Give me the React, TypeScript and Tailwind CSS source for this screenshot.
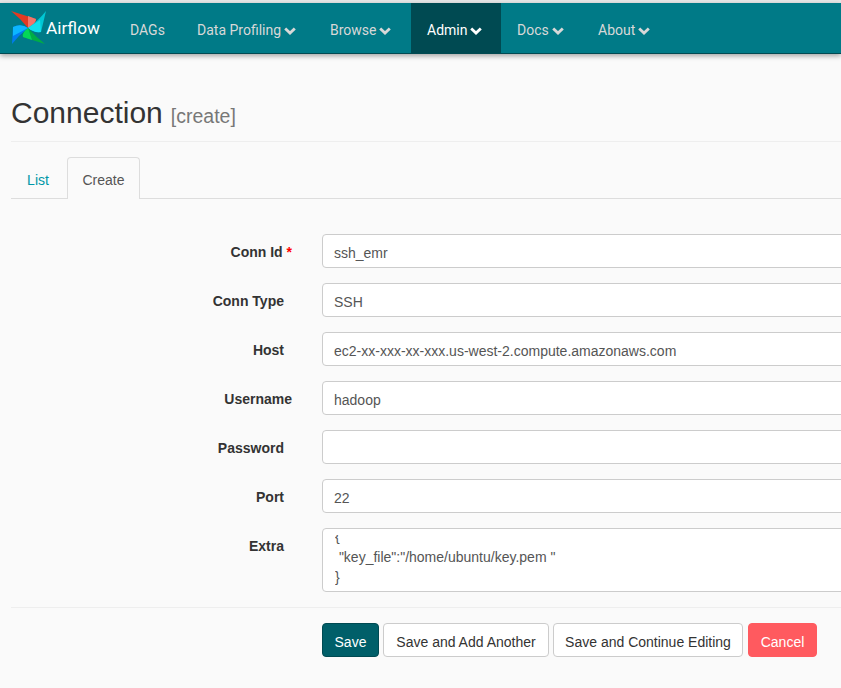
import React from 'react';

const navItems = [
    { label: 'DAGs', caret: false, active: false, width: 'w-[67px]' },
    { label: 'Data Profiling', caret: true, active: false, width: 'w-[133px]' },
    { label: 'Browse', caret: true, active: false, width: 'w-[97px]' },
    { label: 'Admin', caret: true, active: true, width: 'w-[90px]' },
    { label: 'Docs', caret: true, active: false, width: 'w-[81px]' },
    { label: 'About', caret: true, active: false, width: 'w-[90px]' },
];

const fields = [
    { label: 'Conn Id', value: 'ssh_emr', required: true, wide: true },
    { label: 'Conn Type', value: 'SSH' },
    { label: 'Host', value: 'ec2-xx-xxx-xx-xxx.us-west-2.compute.amazonaws.com' },
    { label: 'Username', value: 'hadoop', wide: true },
    { label: 'Password', value: '' },
    { label: 'Port', value: '22' },
];

const Chevron = () => (
    <svg viewBox="0 0 12 8" className="w-[12px] h-[8px] ml-[3px]" fill="none" stroke="currentColor" strokeWidth="2.8">
        <path d="M1.2 1.4 L6 6 L10.8 1.4" />
    </svg>
);

const Logo = () => (
    <svg viewBox="0 0 36 36" className="w-[36px] h-[36px]">
        <path d="M0 1 L25 9 Q25 14 17 18 Q9 8 0 1 Z" fill="#e43921" />
        <path d="M17 6 L25 9 Q25 14 17 18 Z" fill="#f4756a" />
        <path d="M35 1 L30 22 Q23 23 17 18 Q27 11 35 1 Z" fill="#00c7d4" />
        <path d="M29 10 L30 22 Q23 23 17 18 Z" fill="#11e1ee" />
        <path d="M34 34 L12 27 Q11 22 17 18 Q25 27 34 34 Z" fill="#00ad46" />
        <path d="M21 30 L12 27 Q11 22 17 18 Z" fill="#04d659" />
        <path d="M1 34 L2 17 Q10 13 17 18 Q8 25 1 34 Z" fill="#017cee" />
        <path d="M2 26 L2 17 Q10 13 17 18 Z" fill="#0cb6ff" />
    </svg>
);

export default function App() {
    return (
        <div className="w-[841px] h-[688px] overflow-hidden bg-[#fafafa] font-['Liberation_Sans',sans-serif] text-[14px] text-[#333]">
            <div className="h-[3px] bg-[#e7e7e7]"></div>
            <nav className="h-[51px] bg-[#007a87] border-b border-[#024a52] shadow-[0_2px_5px_rgba(0,0,0,0.35)] flex font-['Roboto',sans-serif] text-[#d8d8d8] text-[14px]">
                <div className="flex items-center pl-[11px] w-[114px]">
                    <Logo />
                    <span className="text-white text-[17.3px] -ml-[1px] mt-[2px]">Airflow</span>
                </div>
                {navItems.map(item => (
                    <div key={item.label} className={`flex items-center pl-[16px] pt-[5px] ${item.width} ${item.active ? 'bg-[#004a52] text-white' : ''}`}>
                        {item.label}
                        {item.caret && <Chevron />}
                    </div>
                ))}
            </nav>

            <div className="pl-[11px]">
                <div className="h-[88px] border-b border-[#eeeeee] flex items-end pb-[12px]">
                    <h1 className="text-[30px] leading-[33px]">Connection</h1>
                    <span className="text-[19.5px] leading-[20px] text-[#777] ml-[8px] mb-[3px]">[create]</span>
                </div>

                <div className="flex h-[57px] pt-[15px] border-b border-[#dddddd]">
                    <div className="w-[54px] mr-[2px] h-[42px] pt-[5px] flex items-center justify-center text-[#0097a7]">List</div>
                    <div className="w-[73px] h-[42px] pt-[3px] flex items-center justify-center text-[#555] border border-b-0 border-[#dddddd] rounded-t-[4px] bg-[#fafafa] relative z-10 mb-[-1px]">Create</div>
                </div>

                <form className="pt-[35px]">
                    <div className="flex flex-col gap-[15px]">
                        {fields.map(f => (
                            <div key={f.label} className="flex">
                                <label className="w-[281px] shrink-0 pt-[8px] text-right font-bold leading-[20px]">
                                    {f.label}
                                    {f.required && <span className="text-[#f00]"> *</span>}
                                    {!f.wide && <span className="inline-block w-[8px]"></span>}
                                </label>
                                <div className="w-[600px] shrink-0 ml-[30px] h-[34px] bg-white border border-[#ccc] rounded-[4px] px-[11px] leading-[36px] text-[#555]">
                                    {f.value}
                                </div>
                            </div>
                        ))}
                        <div className="flex">
                            <label className="w-[281px] shrink-0 pt-[8px] text-right font-bold leading-[20px]">
                                Extra
                                <span className="inline-block w-[8px]"></span>
                            </label>
                            <div className="w-[600px] shrink-0 ml-[30px] h-[64px] bg-white border border-[#ccc] rounded-[4px] px-[12px] leading-[20.5px] text-[#555]">
                                {/* textarea is scrolled a bit, first line is cut at the padding edge */}
                                <div className="mt-[6px] h-[52px] overflow-hidden">
                                    <div className="-mt-[9px] whitespace-pre">{'{\n "key_file":"/home/ubuntu/key.pem "\n}'}</div>
                                </div>
                            </div>
                        </div>
                    </div>

                    <div className="border-t border-[#eeeeee] mt-[15px] pt-[15px] pl-[311px] flex text-center">
                        <button type="button" className="w-[57px] h-[34px] pt-[4px] rounded-[4px] bg-[#005f69] border border-[#004a52] text-white">Save</button>
                        <button type="button" className="w-[166px] ml-[4px] h-[34px] pt-[4px] rounded-[4px] bg-white border border-[#ccc] text-[#333]">Save and Add Another</button>
                        <button type="button" className="w-[190px] ml-[4px] h-[34px] pt-[4px] rounded-[4px] bg-white border border-[#ccc] text-[#333]">Save and Continue Editing</button>
                        <button type="button" className="w-[69px] ml-[5px] h-[34px] pt-[4px] rounded-[4px] bg-[#ff5a5f] border border-[#ff5a5f] text-white">Cancel</button>
                    </div>
                </form>
            </div>
        </div>
    );
}
